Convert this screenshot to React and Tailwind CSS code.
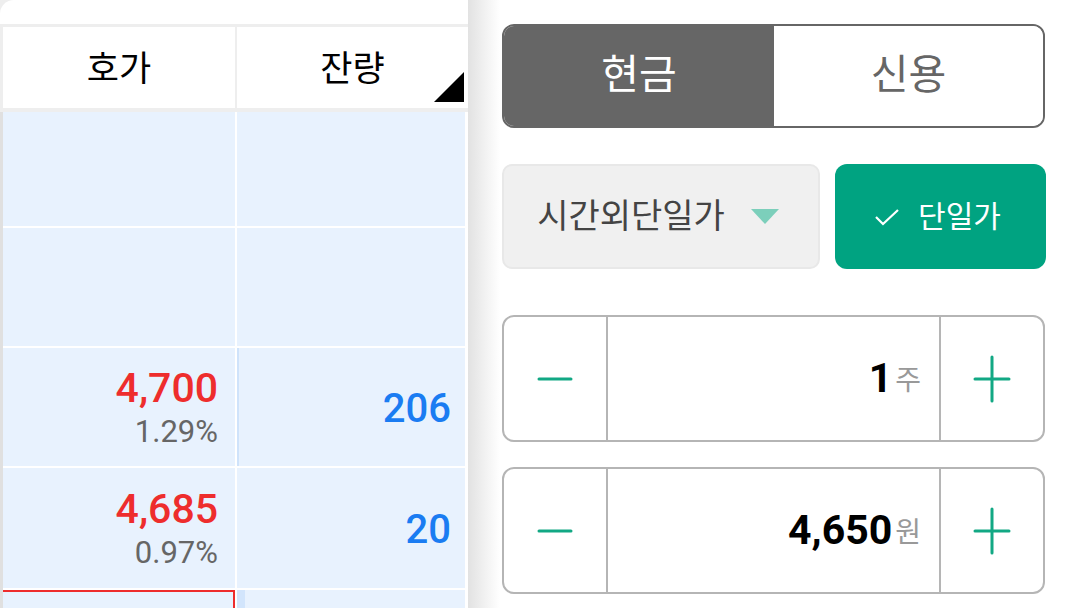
import React from 'react';

const font = { fontFamily: 'Roboto, "Noto Sans CJK KR", sans-serif' };

const Minus = () => (
  <svg width="36" height="4" viewBox="0 0 36 4">
    <line x1="2" y1="2" x2="34" y2="2" stroke="#12a884" strokeWidth="3" strokeLinecap="round" />
  </svg>
);

const Plus = () => (
  <svg width="38" height="48" viewBox="0 0 38 48">
    <line x1="2" y1="24" x2="36" y2="24" stroke="#12a884" strokeWidth="3" strokeLinecap="round" />
    <line x1="19" y1="2" x2="19" y2="46" stroke="#12a884" strokeWidth="3" strokeLinecap="round" />
  </svg>
);

const Stepper = ({ value, unit }) => (
  <div className="flex h-[127px] w-[543px] overflow-hidden rounded-[12px] border-2 border-[#b5b5b5] bg-white">
    <div className="flex w-[104px] items-center justify-center border-r-2 border-[#b5b5b5]">
      <Minus />
    </div>
    <div className="flex flex-1 items-center justify-end pr-[18px]">
      <span className="text-[41px] font-bold text-black">{value}</span>
      <span className="ml-[3px] mt-[4px] text-[28px] text-[#999]">{unit}</span>
    </div>
    <div className="flex w-[104px] items-center justify-center border-l-2 border-[#b5b5b5]">
      <Plus />
    </div>
  </div>
);

const rows = [
  { price: '', rate: '', qty: '', h: 'h-[114px]' },
  { price: '', rate: '', qty: '', h: 'h-[118px]' },
  { price: '4,700', rate: '1.29%', qty: '206', h: 'h-[118px]', bar: 'w-[2px]' },
  { price: '4,685', rate: '0.97%', qty: '20', h: 'h-[120px]' },
];

export default function App() {
  return (
    <div className="flex h-[608px] w-[1080px] overflow-hidden bg-white" style={font}>
      <div className="flex w-[468px] flex-col bg-[#eeeeee]">
        <div className="h-6 rounded-tl-[14px] bg-white" />
        <div className="mt-[3px] flex h-[81px] gap-[2px] pl-[3px]">
          <div className="flex w-[232px] items-center justify-center pt-[5px] bg-white text-[35px] text-black">호가</div>
          <div className="relative flex flex-1 items-center justify-center pt-[5px] bg-white text-[35px] text-black">
            잔량
            <div className="absolute bottom-[6px] right-[4px] h-0 w-0 border-b-[30px] border-l-[30px] border-b-black border-l-transparent" />
          </div>
        </div>
        <div className="mt-[4px] flex flex-1">
          <div className="w-[3px] bg-[#e0e0e0]" />
          <div className="flex flex-1 flex-col gap-[2px] bg-white pr-[3px]">
            {rows.map((r, i) => (
              <div key={i} className={`flex gap-[2px] ${r.h}`}>
                <div className="flex w-[232px] flex-col items-end justify-center bg-[#e8f2fe] pr-[17px] pt-[4px]">
                  {r.price && <span className="text-[41px] font-medium leading-[46px] text-[#ee2d2d]">{r.price}</span>}
                  {r.rate && <span className="text-[31px] leading-[42px] text-[#666]">{r.rate}</span>}
                </div>
                <div className="flex flex-1 bg-[#e8f2fe]">
                  {r.bar && <div className="w-[2px] bg-[#cfe3fb]" />}
                  <div className="flex flex-1 items-center justify-end pr-[14px] pt-[4px] text-[40px] font-medium text-[#1a7cf2]">{r.qty}</div>
                </div>
              </div>
            ))}
            <div className="flex flex-1 gap-[2px]">
              <div className="w-[232px] border-l-0 border-r-2 border-t-2 border-[#ee2d2d] bg-[#e8f2fe]" />
              <div className="flex flex-1 bg-[#e8f2fe]">
                <div className="w-[8px] bg-[#d2e5fc]" />
              </div>
            </div>
          </div>
        </div>
      </div>
      <div className="w-[32px] bg-gradient-to-r from-[#e2e2e2] to-white" />
      <div className="flex flex-1 flex-col pl-[2px] pt-6">
        <div className="flex h-[104px] w-[543px] overflow-hidden rounded-[12px] border-2 border-[#666]">
          <div className="flex w-[270px] items-center justify-center bg-[#666] text-[41px] text-white">현금</div>
          <div className="flex flex-1 items-center justify-center bg-white text-[41px] text-[#666]">신용</div>
        </div>
        <div className="mt-[36px] flex h-[105px] gap-[15px]">
          <div className="flex w-[318px] items-center justify-center gap-[26px] rounded-[10px] border-2 border-[#e8e8e8] bg-[#f0f0f0] pr-[6px] text-[34px] text-[#444]">
            시간외단일가
            <div className="h-0 w-0 border-l-[14px] border-r-[14px] border-t-[15px] border-l-transparent border-r-transparent border-t-[#7ccfbb]" />
          </div>
          <div className="flex w-[211px] items-center justify-center gap-[18px] rounded-[12px] bg-[#00a381] pr-[6px] text-[30px] text-white">
            <svg width="26" height="20" viewBox="0 0 26 20">
              <path d="M2 10 L9 17 L24 3" fill="none" stroke="white" strokeWidth="2.2" />
            </svg>
            단일가
          </div>
        </div>
        <div className="mt-[46px] flex flex-col gap-[25px]">
          <Stepper value="1" unit="주" />
          <Stepper value="4,650" unit="원" />
        </div>
      </div>
    </div>
  );
}
